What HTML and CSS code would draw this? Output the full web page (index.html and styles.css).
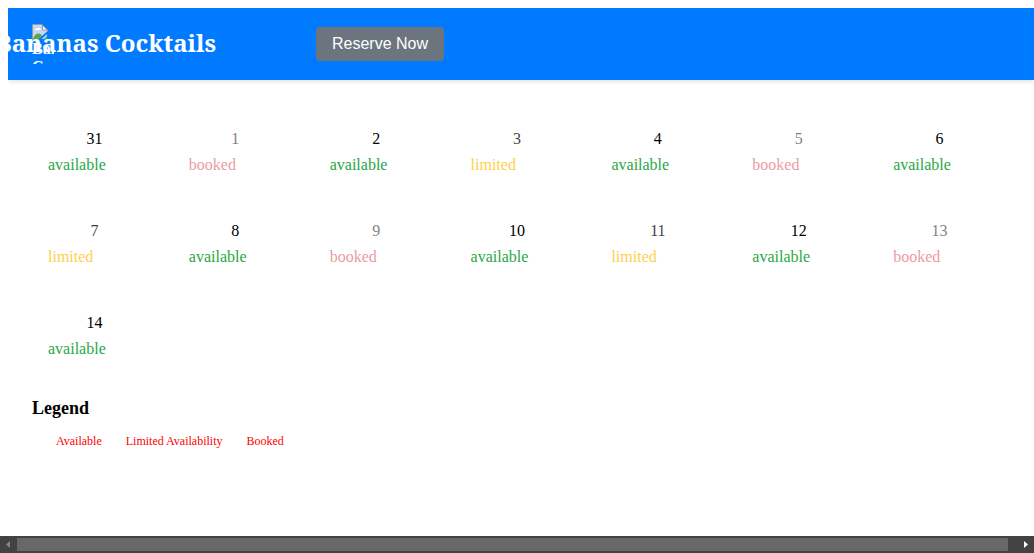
FILE: index.html
```html
<!DOCTYPE html>
<html lang="en">
<head>
<meta charset="utf-8">
<title>Bananas Cocktails</title>
<link rel="stylesheet" href="styles.css">
</head>
<body>
<header class="header">
  <div class="brand">
    <div class="logo">
      <svg class="logo-icon" width="16" height="16" viewBox="0 0 16 16" aria-hidden="true">
        <path fill="#c3d8f8" d="M1 1h9l5 5v9H1z"/>
        <path fill="#fff" d="M3 6c0-2 2-2 2-1 1-2 3-1 3 0 1 0 1 1 1 1zM10 1v5h5z"/>
        <path fill="#56ad3c" d="M1 15c2-6 7-7 9-3l-3 3z"/>
        <path fill="#56ad3c" d="M12 15l3-3v3z"/>
        <path fill="none" stroke="#999" d="M.5 16V.5H10l5.500 5.500V8M10.500 1v5h5"/>
        <path stroke="#007bff" stroke-width="2" d="M7 16l9-8"/>
      </svg>
      <span class="logo-alt">Bananas Cocktails</span>
    </div>
    <h1 class="title">Bananas Cocktails</h1>
  </div>
  <button class="reserve" type="button">Reserve Now</button>
</header>
<main class="main">
  <div class="calendar">
    <div class="day available"><span class="date">31</span><span class="status">available</span></div>
    <div class="day booked"><span class="date">1</span><span class="status">booked</span></div>
    <div class="day available"><span class="date">2</span><span class="status">available</span></div>
    <div class="day limited"><span class="date">3</span><span class="status">limited</span></div>
    <div class="day available"><span class="date">4</span><span class="status">available</span></div>
    <div class="day booked"><span class="date">5</span><span class="status">booked</span></div>
    <div class="day available"><span class="date">6</span><span class="status">available</span></div>
    <div class="day limited"><span class="date">7</span><span class="status">limited</span></div>
    <div class="day available"><span class="date">8</span><span class="status">available</span></div>
    <div class="day booked"><span class="date">9</span><span class="status">booked</span></div>
    <div class="day available"><span class="date">10</span><span class="status">available</span></div>
    <div class="day limited"><span class="date">11</span><span class="status">limited</span></div>
    <div class="day available"><span class="date">12</span><span class="status">available</span></div>
    <div class="day booked"><span class="date">13</span><span class="status">booked</span></div>
    <div class="day available"><span class="date">14</span><span class="status">available</span></div>
  </div>
  <section class="legend">
    <h2 class="legend-title">Legend</h2>
    <ul class="legend-list">
      <li>Available</li>
      <li>Limited Availability</li>
      <li>Booked</li>
    </ul>
  </section>
</main>
<div class="scrollbar">
  <button class="scroll-arrow" type="button" aria-label="Scroll left"><svg width="17" height="17" viewBox="0 0 17 17"><path fill="#868686" d="M10 5v7L6 8.500z"/></svg></button>
  <div class="scroll-thumb"></div>
  <button class="scroll-arrow scroll-right" type="button" aria-label="Scroll right"><svg width="17" height="17" viewBox="0 0 17 17"><path fill="#fff" d="M7 5v7l4-3.500z"/></svg></button>
</div>
</body>
</html>
```
FILE: styles.css
```css
* {
  box-sizing: border-box;
}

body {
  margin: 8px 0 0 8px;
  overflow: hidden;
  background: #fff;
  color: #000;
  font: 16px/18px "Liberation Serif", "Times New Roman", serif;
}

.header {
  display: flex;
  align-items: center;
  gap: 100px;
  padding: 16px 24px;
  background: #007bff;
  color: #fff;
  box-shadow: 0 2px 4px rgba(0, 0, 0, 0.1);
}

.brand {
  position: relative;
  width: 184px;
}

.logo {
  width: 22px;
  height: 40px;
  overflow: hidden;
  font-weight: bold;
}

.logo-icon,
.logo-alt {
  display: block;
}

/* The title lies over the logo and runs out past the header's left edge. */
.title {
  position: absolute;
  right: 0;
  top: 0;
  margin: 0;
  font: bold 24px/38px "Noto Serif", "Liberation Serif", serif;
  white-space: nowrap;
}

.reserve {
  padding: 8px 16px;
  border: 0;
  border-radius: 4px;
  background: #6c757d;
  color: #fff;
  font: 16px/18px "Liberation Sans", Arial, sans-serif;
}

.main {
  padding: 34px 32px 0 24px;
}

.calendar {
  display: grid;
  grid-template-columns: repeat(7, 1fr);
  gap: 16px;
}

.day {
  display: flex;
  flex-direction: column;
  gap: 8px;
  padding: 16px 0;
}

.date {
  text-align: center;
}

.status {
  padding-left: 16px;
}

.available .status {
  color: #28a745;
}

.limited {
  opacity: 0.75;
}

.limited .status {
  color: #ffc107;
}

.booked {
  opacity: 0.5;
}

.booked .status {
  color: #dc3545;
}

.legend {
  margin-top: 24px;
}

.legend-title {
  margin: 0;
  font-size: 18px;
  line-height: 20px;
}

.legend-list {
  display: flex;
  gap: 24px;
  margin: 15px 0 0;
  padding: 0 24px;
  list-style: none;
  color: #f00;
  font-size: 12px;
  line-height: 16px;
}

.scrollbar {
  position: fixed;
  left: 0;
  right: 0;
  bottom: 0;
  display: flex;
  height: 17px;
  background: #424242;
}

.scroll-arrow {
  width: 17px;
  padding: 0;
  border: 0;
  background: none;
}

.scroll-arrow svg {
  display: block;
}

.scroll-thumb {
  flex: 1;
  margin: 2px 9px 2px 0;
  background: #686868;
}
```
